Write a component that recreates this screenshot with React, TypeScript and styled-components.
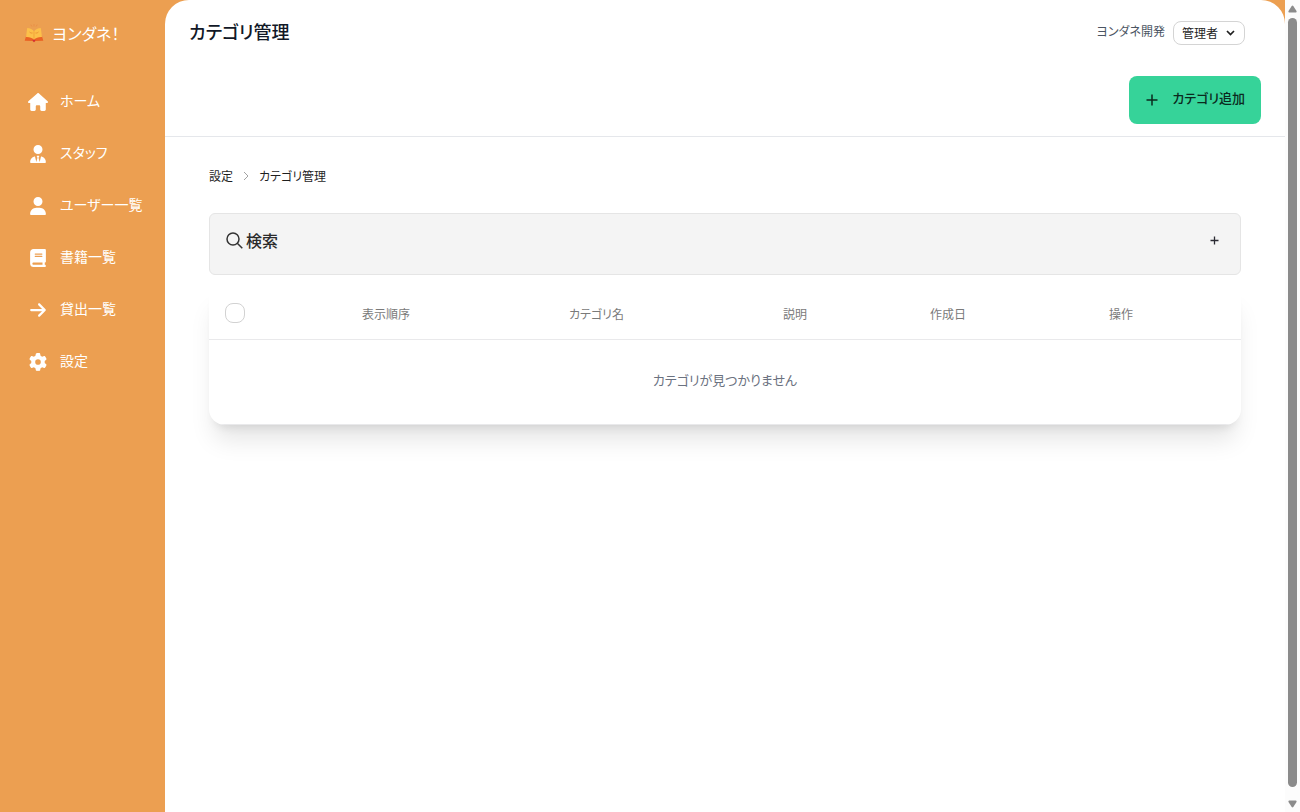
import React from "react";
import styled, { createGlobalStyle } from "styled-components";
import { FaHouse, FaUserTie, FaUser, FaBook, FaArrowRight, FaGear } from "react-icons/fa6";

const GlobalStyle = createGlobalStyle`
  *, *::before, *::after { box-sizing: border-box; }
  body {
    margin: 0;
    background: #fff;
    color: #1f2937;
    font-family: "Noto Sans CJK JP", "Noto Sans", sans-serif;
    font-feature-settings: "palt";
    font-size: 14px;
    line-height: 20px;
  }
  button, select, input { font: inherit; font-feature-settings: inherit; }
`;

const Shell = styled.div`
  display: grid;
  grid-template-columns: 165px minmax(0, 1fr) 15px;
  min-height: 100vh;
`;

const Stage = styled.div`
  display: grid;
  grid-template-columns: subgrid;
  grid-column: 1 / 3;
  background: #ec9f51;
`;

const Sidebar = styled.aside`
  padding: 20px 12px;
  color: #fff;
`;

const Brand = styled.a`
  display: flex;
  align-items: center;
  gap: 8px;
  padding-left: 12px;
  color: inherit;
  font-size: 16px;
  line-height: 26px;
  text-decoration: none;
`;

const NavList = styled.ul`
  display: flex;
  flex-direction: column;
  gap: 12px;
  margin: 36px 0 0;
  padding: 0;
  list-style: none;
`;

const NavLink = styled.a`
  display: flex;
  align-items: center;
  gap: 12px;
  height: 40px;
  padding-left: 16px;
  color: inherit;
  text-decoration: none;
  white-space: nowrap;
`;

const NavIcon = styled.span`
  display: flex;
  justify-content: center;
  width: 20px;

  svg {
    width: 20px;
    height: 18px;
  }
`;

const RaisedText = styled.span`
  padding-bottom: 4px;
`;

const Main = styled.main`
  background: #fff;
  border-radius: 24px 24px 0 0;
`;

const Header = styled.header`
  border-bottom: 1px solid #e5e7eb;
  padding: 15px 24px 12px;
`;

const HeaderRow = styled.div`
  display: flex;
  align-items: center;
  justify-content: space-between;
  height: 32px;
  padding-right: 16px;
`;

const Title = styled.h1`
  margin: 0;
  color: #111827;
  font-size: 18px;
  line-height: 28px;
  font-weight: 500;
`;

const Account = styled.div`
  display: flex;
  align-items: center;
  gap: 8px;
  color: #4b5563;
  font-size: 12px;
`;

const SelectWrap = styled.span`
  position: relative;
  display: flex;
  margin-top: 4px;

  svg {
    position: absolute;
    top: 8px;
    right: 10px;
    pointer-events: none;
  }
`;

const RoleSelect = styled.select`
  appearance: none;
  width: 72px;
  height: 24px;
  padding: 0 8px;
  border: 1px solid #d4d4d4;
  border-radius: 8px;
  background: #fff;
  color: #1f1f1f;
`;

const Actions = styled.div`
  display: flex;
  justify-content: flex-end;
  padding-top: 29px;
`;

const AddButton = styled.button`
  display: flex;
  align-items: center;
  justify-content: space-between;
  width: 132px;
  height: 48px;
  padding: 0 16px;
  border: 0;
  border-radius: 8px;
  background: #36d399;
  color: #0b2a1e;
  font-size: 13px;
  font-weight: 500;
`;

const Content = styled.div`
  padding: 29px 44px;
`;

const Breadcrumb = styled.ol`
  display: flex;
  align-items: center;
  gap: 10px;
  margin: 0 0 27px;
  padding: 0;
  color: #1f1f1f;
  font-size: 12px;
  list-style: none;

  a {
    color: inherit;
    text-decoration: none;
  }
`;

const Crumb = styled.li`
  display: flex;
  align-items: center;
  gap: 10px;
`;

const SearchPanel = styled.button`
  display: flex;
  align-items: flex-start;
  justify-content: space-between;
  width: 100%;
  height: 62px;
  margin-bottom: 12px;
  padding: 15px 21px 15px 16px;
  border: 1px solid #e5e5e5;
  border-radius: 6px;
  background: #f4f4f4;
  color: #2b2b2b;
  line-height: 22px;
`;

const SearchLabel = styled.span`
  display: flex;
  align-items: center;
  gap: 3px;
  font-size: 16px;
  font-weight: 500;
`;

const Card = styled.div`
  overflow: hidden;
  border-radius: 0 0 16px 16px;
  background: #fff;
  box-shadow: 0 20px 25px -5px rgba(0, 0, 0, 0.1), 0 8px 10px -6px rgba(0, 0, 0, 0.1);
`;

const Table = styled.table`
  width: 100%;
  table-layout: fixed;
  border-collapse: separate;
  border-spacing: 0;
`;

const HeadCell = styled.th<{ $start?: boolean }>`
  height: 53px;
  padding: ${(p) => (p.$start ? "0 16px" : "2px 16px 0")};
  border-bottom: 1px solid #e9e9eb;
  color: #7a7a7a;
  font-size: 12px;
  font-weight: 400;
  text-align: ${(p) => (p.$start ? "left" : "center")};
`;

const Checkbox = styled.input`
  appearance: none;
  display: block;
  width: 20px;
  height: 20px;
  margin: 0;
  border: 1px solid #d2d2d2;
  border-radius: 8px;
  background: #fff;
`;

const EmptyCell = styled.td`
  height: 85px;
  padding: 0 16px 4px;
  border-bottom: 1px solid #e9e9eb;
  color: #6b7280;
  font-size: 13px;
  text-align: center;
`;

const ScrollTrack = styled.div`
  position: sticky;
  top: 0;
  display: flex;
  flex-direction: column;
  align-items: center;
  gap: 5px;
  height: 100vh;
  padding: 5px 0 4px;
  background: #fcfcfc;
`;

const ScrollThumb = styled.div`
  flex: 1;
  width: 9px;
  margin-bottom: 8px;
  border-radius: 5px;
  background: #8b8b8b;
`;

const navItems = [
  { label: "ホーム", Icon: FaHouse },
  { label: "スタッフ", Icon: FaUserTie },
  { label: "ユーザー一覧", Icon: FaUser },
  { label: "書籍一覧", Icon: FaBook },
  { label: "貸出一覧", Icon: FaArrowRight },
  { label: "設定", Icon: FaGear },
];

const columns = [
  { label: "表示順序", width: 224 },
  { label: "カテゴリ名", width: 197 },
  { label: "説明", width: 200 },
  { label: "作成日", width: 106 },
  { label: "操作", width: 240 },
];

const BookLogo = () => (
  <svg width="20" height="20" viewBox="0 0 20 20" aria-hidden="true">
    <g stroke="#e98742" strokeWidth="1" strokeLinecap="round" opacity="0.6">
      <path d="M10 1.500v1.600M7 2l.7 1.200M13 2l-.7 1.200" />
    </g>
    <path d="M2.200 12.500 10 14.500l7.800-2 1.500 5.300-7.700.2-1.600 1.200-1.600-1.200-7.700-.2z" fill="#ea6324" />
    <path d="M3.200 5C6 5 8.600 6.400 10 8.400 11.400 6.400 14 5 16.800 5l1.200 9c-3.400-.2-6 .8-8 2.700-2-1.900-4.600-2.900-8-2.700z" fill="#fcc04a" />
    <path d="M10 8.400v8" stroke="#f3a338" strokeWidth="1" />
    <path d="M5.500 9c1 .9 2 1.200 3 1M14.500 9c-1 .9-2 1.200-3 1" fill="none" stroke="#ee9435" strokeWidth="1" />
    <path d="M8.300 16.800h3.400L10 19.200z" fill="#d22f3a" />
  </svg>
);

const ScrollArrow = ({ down }: { down?: boolean }) => (
  <svg width="9" height="8" viewBox="0 0 9 8" aria-hidden="true">
    <path
      d={down ? "M1 .5h7q1 .5.5 1.500L5.300 7q-.8.900-1.600 0L.500 2Q0 1 1 .500z" : "M1 7.500h7q1-.5.5-1.500L5.300 1q-.8-.9-1.600 0L.500 6Q0 7 1 7.500z"}
      fill="#8b8b8b"
    />
  </svg>
);

export default function App() {
  return (
    <>
      <GlobalStyle />
      <Shell>
        <Stage>
          <Sidebar>
            <Brand href="#">
              <BookLogo />
              <span>ヨンダネ！</span>
            </Brand>
            <nav>
              <NavList>
                {navItems.map(({ label, Icon }) => (
                  <li key={label}>
                    <NavLink href="#">
                      <NavIcon>
                        <Icon aria-hidden="true" />
                      </NavIcon>
                      <RaisedText>{label}</RaisedText>
                    </NavLink>
                  </li>
                ))}
              </NavList>
            </nav>
          </Sidebar>
          <Main>
            <Header>
              <HeaderRow>
                <Title>カテゴリ管理</Title>
                <Account>
                  <label htmlFor="role">ヨンダネ開発</label>
                  <SelectWrap>
                    <RoleSelect id="role">
                      <option>管理者</option>
                    </RoleSelect>
                    <svg width="9" height="8" viewBox="0 0 9 8" aria-hidden="true">
                      <path d="M1 2 4.500 5.500 8 2" fill="none" stroke="#1f1f1f" strokeWidth="1.700" />
                    </svg>
                  </SelectWrap>
                </Account>
              </HeaderRow>
              <Actions>
                <AddButton type="button">
                  <svg width="14" height="14" viewBox="0 0 14 14" aria-hidden="true">
                    <path d="M7 1.500v11M1.500 7h11" stroke="currentColor" strokeWidth="1.500" />
                  </svg>
                  <RaisedText>カテゴリ追加</RaisedText>
                </AddButton>
              </Actions>
            </Header>
            <Content>
              <nav>
                <Breadcrumb>
                  <Crumb>
                    <a href="#">設定</a>
                    <svg width="6" height="10" viewBox="0 0 6 10" aria-hidden="true">
                      <path d="M1 1l4 4-4 4" fill="none" stroke="#a3a3a3" />
                    </svg>
                  </Crumb>
                  <Crumb>カテゴリ管理</Crumb>
                </Breadcrumb>
              </nav>
              <SearchPanel type="button" aria-expanded="false">
                <SearchLabel>
                  <svg width="17" height="17" viewBox="0 0 17 17" fill="none" stroke="#333" strokeWidth="1.500" aria-hidden="true">
                    <circle cx="7" cy="7" r="6" />
                    <path d="M11.300 11.300 16.300 16.300" />
                  </svg>
                  検索
                </SearchLabel>
                <svg width="9" height="22" viewBox="0 0 9 22" aria-hidden="true">
                  <path d="M4.500 7.500v8M.5 11.500h8" stroke="#2b2b33" strokeWidth="1.300" />
                </svg>
              </SearchPanel>
              <Card>
                <Table>
                  <colgroup>
                    <col width={65} />
                    {columns.map((c) => (
                      <col key={c.label} width={c.width} />
                    ))}
                  </colgroup>
                  <thead>
                    <tr>
                      <HeadCell $start>
                        <Checkbox type="checkbox" aria-label="すべて選択" />
                      </HeadCell>
                      {columns.map((c) => (
                        <HeadCell key={c.label}>{c.label}</HeadCell>
                      ))}
                    </tr>
                  </thead>
                  <tbody>
                    <tr>
                      <EmptyCell colSpan={6}>カテゴリが見つかりません</EmptyCell>
                    </tr>
                  </tbody>
                </Table>
              </Card>
            </Content>
          </Main>
        </Stage>
        <ScrollTrack aria-hidden="true">
          <ScrollArrow />
          <ScrollThumb />
          <ScrollArrow down />
        </ScrollTrack>
      </Shell>
    </>
  );
}
